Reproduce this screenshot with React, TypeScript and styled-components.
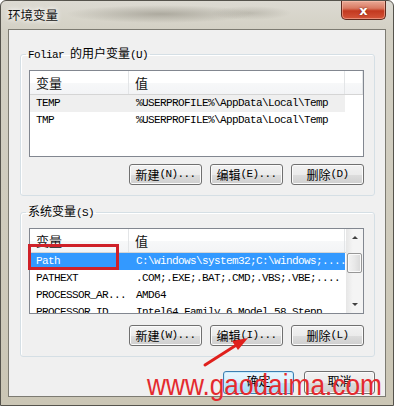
import styled, { createGlobalStyle } from 'styled-components'

const GlobalStyle = createGlobalStyle`
  html, body {
    margin: 0;
    padding: 0;
    background: #ffffff;
  }
  body {
    font-family: "Liberation Mono", "Noto Sans CJK SC", monospace;
  }
`

const Window = styled.div`
  position: relative;
  width: 394px;
  height: 406px;
  box-sizing: border-box;
  display: flex;
  flex-direction: column;
  border: 1px solid #55534c;
  border-radius: 6px 6px 0 0;
  overflow: hidden;
  background:
    radial-gradient(ellipse 95px 9px at 160px 13px, rgba(120, 116, 104, 0.45), rgba(120, 116, 104, 0) 100%),
    radial-gradient(ellipse 40px 7px at 250px 12px, rgba(130, 126, 114, 0.3), rgba(130, 126, 114, 0) 100%),
    linear-gradient(to bottom, #dcdad2 0%, #d3d0c4 30px, #cbc6b5 100%);
`

const TitleBar = styled.div`
  height: 28px;
  display: flex;
  align-items: flex-start;
  justify-content: space-between;
  padding-left: 7px;
`

const Title = styled.div`
  font-family: "Noto Sans CJK SC", sans-serif;
  font-size: 12.5px;
  line-height: 27px;
  color: #111;
  text-shadow: 0 0 6px #fff, 0 0 4px #fff;
`

const CloseButton = styled.div`
  width: 43px;
  height: 18px;
  margin-right: 7px;
  border: 1px solid #5d2a1e;
  border-top: none;
  border-radius: 0 0 5px 5px;
  display: flex;
  align-items: center;
  justify-content: center;
  background: linear-gradient(to bottom, #e9a996 0%, #d97a62 40%, #c3391f 55%, #d4553a 100%);
  box-shadow: inset 0 0 0 1px rgba(255, 200, 180, 0.5);
  color: #fff;
  font-family: "DejaVu Sans", sans-serif;
  font-weight: bold;
  font-size: 13px;
  text-shadow: 0 0 2px #6b1a0c;
`

const Client = styled.div`
  flex: 1;
  margin: 0 7px 8px 7px;
  background: #f0f0f0;
  border: 1px solid #7d7b72;
  display: flex;
  flex-direction: column;
  padding: 16px 10px 0 11px;
`

const Group = styled.fieldset<{ $top: number }>`
  margin: ${(p) => p.$top}px 0 0 0;
  padding: 8px 10px 10px 8px;
  border: 1px solid #d5dfe5;
  border-radius: 3px;
  box-shadow: inset 1px 1px 0 #fff;
  min-inline-size: 0;
`

const Legend = styled.legend`
  padding: 0 2px;
  margin-left: -3px;
  font-size: 11px;
  letter-spacing: -0.6px;
  line-height: 14px;
  color: #000;
`

const Cjk = styled.span`
  font-family: "Noto Sans CJK SC", sans-serif;
  font-size: 12px;
  letter-spacing: 0;
`

const ListBox = styled.div<{ $height: number }>`
  height: ${(p) => p.$height}px;
  box-sizing: border-box;
  border: 1px solid #828790;
  background: #fff;
  display: flex;
  overflow: hidden;
`

const ListMain = styled.div`
  flex: 1;
  display: flex;
  flex-direction: column;
  overflow: hidden;
`

const HeaderRow = styled.div`
  height: 23px;
  flex-shrink: 0;
  display: flex;
  border-bottom: 1px solid #d5d5d5;
  background: linear-gradient(to bottom, #ffffff 0%, #ffffff 50%, #f7f8f9 51%, #f3f4f6 100%);
`

const HeaderCell = styled.div<{ $width?: number }>`
  ${(p) => (p.$width ? `width: ${p.$width}px;` : 'flex: 1;')}
  flex-shrink: 0;
  box-sizing: border-box;
  padding-left: 6px;
  border-right: 1px solid #e3e5e7;
  display: flex;
  align-items: center;
  font-family: "Noto Sans CJK SC", sans-serif;
  font-size: 13px;
  color: #111;
`

const Row = styled.div<{ $state?: 'hover' | 'selected' }>`
  height: 17px;
  flex-shrink: 0;
  width: 315px;
  display: flex;
  align-items: center;
  background: ${(p) => (p.$state === 'selected' ? '#3399ff' : p.$state === 'hover' ? '#efefef' : 'transparent')};
  color: ${(p) => (p.$state === 'selected' ? '#ffffff' : '#000000')};
`

const Cell = styled.div<{ $width: number; $pad: number }>`
  width: ${(p) => p.$width}px;
  box-sizing: border-box;
  padding-left: ${(p) => p.$pad}px;
  white-space: nowrap;
  overflow: hidden;
  font-size: 11px;
  letter-spacing: -0.6px;
  line-height: 17px;
`

const Scrollbar = styled.div`
  width: 17px;
  flex-shrink: 0;
  display: flex;
  flex-direction: column;
  background: linear-gradient(to right, #e6e6e6, #f4f4f4 40%, #f4f4f4);
`

const ScrollArrow = styled.div<{ $dir: 'up' | 'down' }>`
  height: 17px;
  display: flex;
  align-items: center;
  justify-content: center;
  &::after {
    content: '';
    width: 0;
    height: 0;
    border-left: 3px solid transparent;
    border-right: 3px solid transparent;
    ${(p) => (p.$dir === 'up' ? 'border-bottom: 3px solid #404040;' : 'border-top: 3px solid #404040;')}
  }
`

const ScrollTrack = styled.div`
  flex: 1;
  padding-top: 7px;
`

const Thumb = styled.div`
  height: 18px;
  margin: 0 1px;
  border: 1px solid #979797;
  border-radius: 2px;
  background: linear-gradient(to right, #f3f3f3 0%, #e8e8e8 50%, #d8d8d8 100%);
  box-shadow: inset 0 0 0 1px #fafafa;
`

const ButtonRow = styled.div<{ $gap: number }>`
  display: flex;
  justify-content: flex-end;
  gap: 8px;
  margin-top: ${(p) => p.$gap}px;
`

const Button = styled.div<{ $primary?: boolean; $w?: number; $h?: number }>`
  width: ${(p) => p.$w ?? 73}px;
  height: ${(p) => p.$h ?? 21}px;
  box-sizing: border-box;
  border: 1px solid ${(p) => (p.$primary ? '#3c7fb1' : '#707070')};
  border-radius: 3px;
  display: flex;
  align-items: ${(p) => (p.$h ? 'flex-start' : 'center')};
  justify-content: center;
  line-height: 17px;
  background: ${(p) =>
    p.$primary
      ? 'linear-gradient(to bottom, #eaf6fd 0%, #d9f0fc 50%, #bee6fd 51%, #a7d9f5 100%)'
      : 'linear-gradient(to bottom, #f2f2f2 0%, #ebebeb 50%, #dddddd 51%, #cfcfcf 100%)'};
  box-shadow: inset 0 0 0 1px ${(p) => (p.$primary ? '#c8ecfd' : '#fbfbfb')};
  font-size: 11px;
  letter-spacing: -0.6px;
  color: #000;
`

const DialogButtons = styled.div`
  display: flex;
  justify-content: flex-end;
  gap: 10px;
  margin-top: 14px;
`

const Annotation = styled.div`
  position: absolute;
  left: 27px;
  top: 243px;
  width: 91px;
  height: 26px;
  box-sizing: border-box;
  border: 3px solid #cf2129;
`

const Arrow = styled.svg`
  position: absolute;
  left: 195px;
  top: 330px;
`

const Watermark = styled.div`
  position: absolute;
  left: 146px;
  top: 370px;
  font-family: "Liberation Sans", Arial, sans-serif;
  font-size: 29px;
  line-height: 1;
  color: #e42a2e;
  transform: scaleX(0.905);
  transform-origin: left top;
  white-space: nowrap;
`

type Variable = { name: string; value: string; state?: 'hover' | 'selected' }

const userVars: Variable[] = [
  { name: 'TEMP', value: '%USERPROFILE%\\AppData\\Local\\Temp', state: 'hover' },
  { name: 'TMP', value: '%USERPROFILE%\\AppData\\Local\\Temp' },
]

const sysVars: Variable[] = [
  { name: 'Path', value: 'C:\\windows\\system32;C:\\windows;....', state: 'selected' },
  { name: 'PATHEXT', value: '.COM;.EXE;.BAT;.CMD;.VBS;.VBE;....' },
  { name: 'PROCESSOR_AR...', value: 'AMD64' },
  { name: 'PROCESSOR_ID...', value: 'Intel64 Family 6 Model 58 Stepp' },
]

const VarList = ({ items, height, scroll }: { items: Variable[]; height: number; scroll?: boolean }) => (
  <ListBox $height={height}>
    <ListMain>
      <HeaderRow>
        <HeaderCell $width={99}>变量</HeaderCell>
        <HeaderCell $width={216}>值</HeaderCell>
        <HeaderCell />
      </HeaderRow>
      {items.map((v) => (
        <Row key={v.name} $state={v.state}>
          <Cell $width={99} $pad={6}>
            {v.name}
          </Cell>
          <Cell $width={216} $pad={7}>
            {v.value}
          </Cell>
        </Row>
      ))}
    </ListMain>
    {scroll && (
      <Scrollbar>
        <ScrollArrow $dir="up" />
        <ScrollTrack>
          <Thumb />
        </ScrollTrack>
        <ScrollArrow $dir="down" />
      </Scrollbar>
    )}
  </ListBox>
)

const Buttons = ({ keys, gap }: { keys: [string, string, string]; gap: number }) => (
  <ButtonRow $gap={gap}>
    <Button>
      <Cjk>新建</Cjk>({keys[0]})...
    </Button>
    <Button>
      <Cjk>编辑</Cjk>({keys[1]})...
    </Button>
    <Button>
      <Cjk>删除</Cjk>({keys[2]})
    </Button>
  </ButtonRow>
)

export default function App() {
  return (
    <>
      <GlobalStyle />
      <Window>
        <TitleBar>
          <Title>环境变量</Title>
          <CloseButton>x</CloseButton>
        </TitleBar>
        <Client>
          <Group $top={0}>
            <Legend>
              Foliar <Cjk>的用户变量</Cjk>(U)
            </Legend>
            <VarList items={userVars} height={87} />
            <Buttons keys={['N', 'E', 'D']} gap={7} />
          </Group>
          <Group $top={8}>
            <Legend>
              <Cjk>系统变量</Cjk>(S)
            </Legend>
            <VarList items={sysVars} height={86} scroll />
            <Buttons keys={['W', 'I', 'L']} gap={11} />
          </Group>
          <DialogButtons>
            <Button $primary $w={71} $h={23}>
              <Cjk>确定</Cjk>
            </Button>
            <Button $w={71} $h={23}>
              <Cjk>取消</Cjk>
            </Button>
          </DialogButtons>
        </Client>
        <Annotation />
        <Arrow width="60" height="40" viewBox="0 0 60 40">
          <line x1="9" y1="34" x2="42" y2="13" stroke="#e0201c" strokeWidth="3" strokeLinecap="round" />
          <polygon points="52,7 36,10 42,19" fill="#e0201c" />
        </Arrow>
        <Watermark>www.gaodaima.com</Watermark>
      </Window>
    </>
  )
}
